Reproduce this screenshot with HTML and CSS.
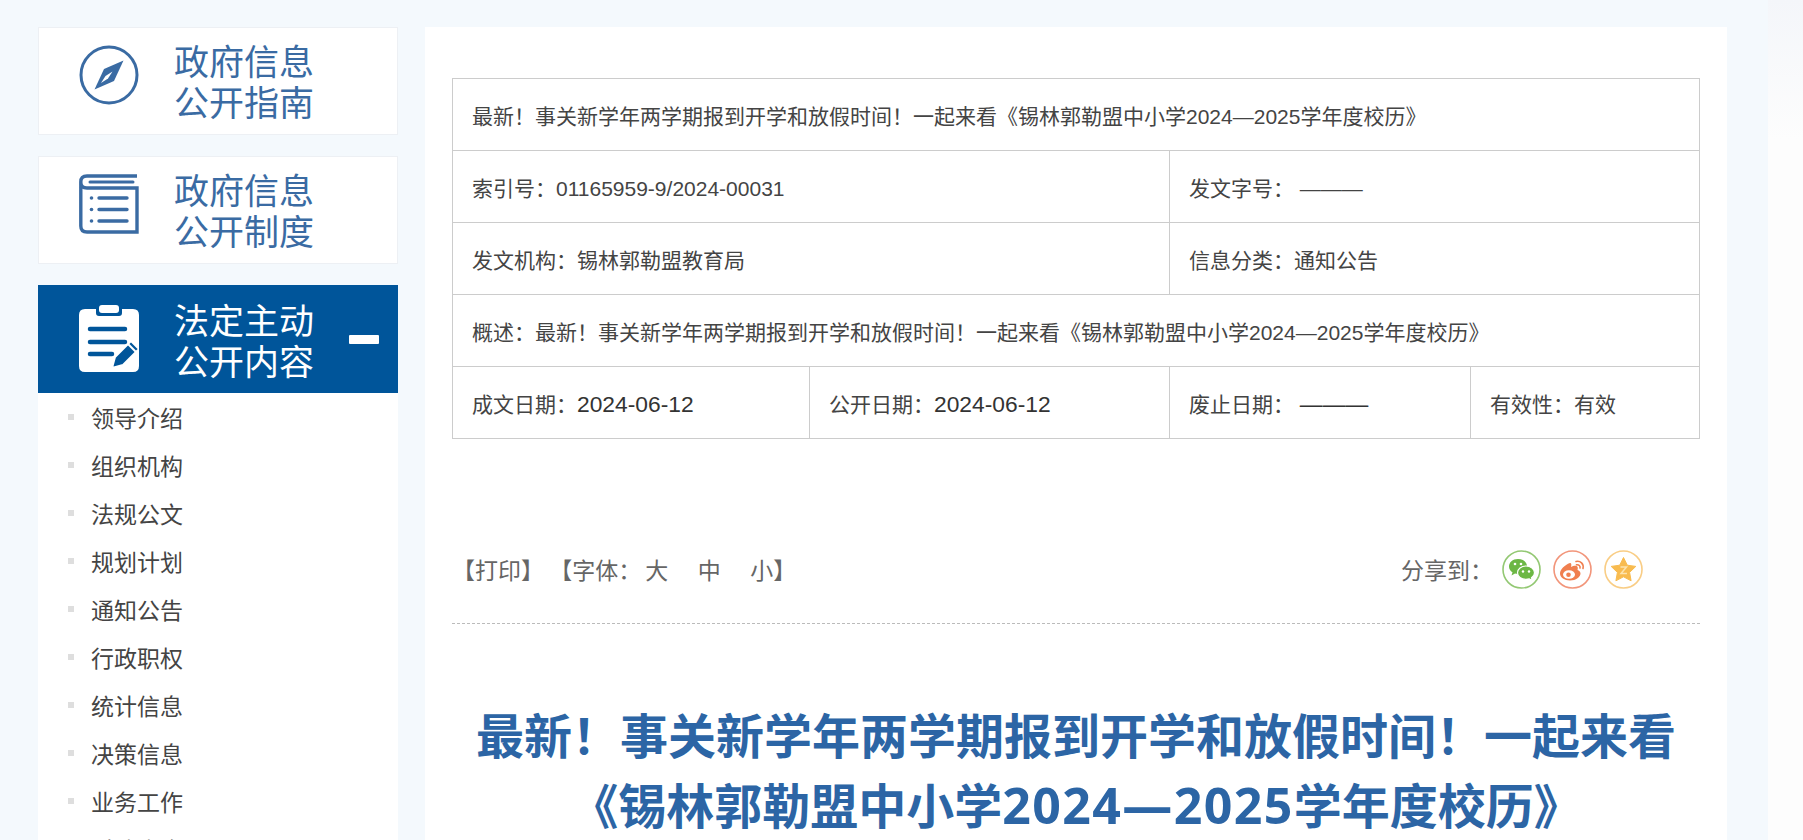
FILE: index.html
```html
<!DOCTYPE html>
<html lang="zh-CN">
<head>
  <meta charset="UTF-8">
  <title>最新！事关新学年两学期报到开学和放假时间</title>
  <link rel="stylesheet" href="styles.css">
</head>
<body>
  <div class="page">

    <aside class="sidebar">
      <a class="side-card" href="#">
        <svg class="side-icon" viewBox="0 0 60 60">
          <circle cx="30" cy="30" r="28" fill="none" stroke="currentColor" stroke-width="3"/>
          <path d="M44.500 15.500 L35 36 L15.500 44.500 L25 24 Z" fill="currentColor"/>
          <path d="M33.500 26.500 L29 33.500 L22 38 L26.500 31 Z" fill="#fff"/>
        </svg>
        <span class="side-title">政府信息<br>公开指南</span>
      </a>
      <a class="side-card" href="#">
        <svg class="side-icon" viewBox="0 0 60 60">
          <path d="M58 2 H8 Q1.800 2 1.800 8 V52 Q1.800 58 8 58 H58 V14 H8 Q1.800 14 1.800 8" fill="none" stroke="currentColor" stroke-width="3.400"/>
          <path d="M11 8 H54" stroke="currentColor" stroke-width="3" stroke-linecap="round"/>
          <path d="M20 24 H48 M20 35.500 H48 M20 47 H48" stroke="currentColor" stroke-width="3.400" stroke-linecap="round"/>
          <circle cx="12.500" cy="24" r="1.800" fill="currentColor"/>
          <circle cx="12.500" cy="35.500" r="1.800" fill="currentColor"/>
          <circle cx="12.500" cy="47" r="1.800" fill="currentColor"/>
        </svg>
        <span class="side-title">政府信息<br>公开制度</span>
      </a>
      <a class="side-card side-card-active" href="#">
        <svg class="side-icon" viewBox="0 0 60 67">
          <path d="M6 4 H17 V8 Q17 11 20 11 H40 Q43 11 43 8 V4 H54 Q60 4 60 10 V61 Q60 67 54 67 H6 Q0 67 0 61 V10 Q0 4 6 4 Z" fill="#fff"/>
          <rect x="20" y="0" width="20" height="8" rx="3" fill="#fff"/>
          <path d="M11 24 H46 M11 37 H46 M11 49 H33" stroke="#00559a" stroke-width="4.500" stroke-linecap="round"/>
          <path d="M33 63 L36 52 L52 36 L60 44 L44 60 Z" fill="#00559a" stroke="#fff" stroke-width="2"/>
          <path d="M49 39 L57 47" stroke="#fff" stroke-width="2"/>
        </svg>
        <span class="side-title">法定主动<br>公开内容</span>
        <span class="side-minus"></span>
      </a>
      <ul class="side-list">
        <li><a href="#">领导介绍</a></li>
        <li><a href="#">组织机构</a></li>
        <li><a href="#">法规公文</a></li>
        <li><a href="#">规划计划</a></li>
        <li><a href="#">通知公告</a></li>
        <li><a href="#">行政职权</a></li>
        <li><a href="#">统计信息</a></li>
        <li><a href="#">决策信息</a></li>
        <li><a href="#">业务工作</a></li>
        <li><a href="#">财政资金</a></li>
      </ul>
    </aside>

    <main class="content">
      <table class="info-table">
        <colgroup>
          <col class="col-a">
          <col class="col-b">
          <col class="col-c">
          <col class="col-d">
        </colgroup>
        <tr>
          <td colspan="4">最新！事关新学年两学期报到开学和放假时间！一起来看《锡林郭勒盟中小学2024—2025学年度校历》</td>
        </tr>
        <tr>
          <td colspan="2">索引号：01165959-9/2024-00031</td>
          <td colspan="2">发文字号： ———</td>
        </tr>
        <tr>
          <td colspan="2">发文机构：锡林郭勒盟教育局</td>
          <td colspan="2">信息分类：通知公告</td>
        </tr>
        <tr>
          <td colspan="4">概述：最新！事关新学年两学期报到开学和放假时间！一起来看《锡林郭勒盟中小学2024—2025学年度校历》</td>
        </tr>
        <tr>
          <td>成文日期：<span class="cell-value">2024-06-12</span></td>
          <td>公开日期：<span class="cell-value">2024-06-12</span></td>
          <td>废止日期： <span class="cell-value">———</span></td>
          <td>有效性：有效</td>
        </tr>
      </table>

      <div class="tools">
        <div class="tools-left">
          <a href="#">【打印】</a>
          <span>【字体：<a class="size-link" href="#">大</a><a class="size-link" href="#">中</a><a class="size-link" href="#">小</a>】</span>
        </div>
        <div class="share">
          <span class="share-label">分享到：</span>
          <a class="share-btn" href="#">
            <svg viewBox="0 0 39 39">
              <circle cx="19.500" cy="19.500" r="18.500" fill="none" stroke="#93c873" stroke-width="1.600"/>
              <path d="M16 9 C10.500 9 7 12.500 7 16.500 C7 19 8.300 21 10.500 22.300 L9.500 25.500 L13 23.500 C14 23.800 15 23.900 16 23.900 C21.500 23.900 25 20.500 25 16.500 C25 12.500 21.500 9 16 9 Z" fill="#6cb744"/>
              <path d="M24 16 C28.800 16 32.500 19 32.500 22.700 C32.500 24.800 31.300 26.600 29.500 27.800 L30.300 30.500 L27.300 28.900 C26.300 29.200 25.200 29.400 24 29.400 C19.200 29.400 15.500 26.400 15.500 22.700 C15.500 19 19.200 16 24 16 Z" fill="#6cb744" stroke="#fff" stroke-width="1.200"/>
              <circle cx="13" cy="14" r="1.300" fill="#fff"/>
              <circle cx="19" cy="14" r="1.300" fill="#fff"/>
              <circle cx="21" cy="21.500" r="1.200" fill="#fff"/>
              <circle cx="27" cy="21.500" r="1.200" fill="#fff"/>
            </svg>
          </a>
          <a class="share-btn" href="#">
            <svg viewBox="0 0 39 39">
              <circle cx="19.500" cy="19.500" r="18.500" fill="none" stroke="#f2957a" stroke-width="1.600"/>
              <path d="M17 13 C11.500 15 7 19.500 7 23.500 C7 27.500 11.500 30.500 17 30.500 C23 30.500 27.500 27 27.500 23.500 C27.500 21.500 26 20.500 24.500 20 C25 18.500 25 17 24 16.300 C22.500 15.300 20 16 18 17 C18.600 15 18.500 12.500 17 13 Z" fill="#f07f4f"/>
              <ellipse cx="16" cy="24.500" rx="6" ry="4.300" fill="#fff"/>
              <circle cx="15.500" cy="24.800" r="2.300" fill="#f07f4f"/>
              <path d="M23 11.500 C27.500 10.500 31 14 30 18.500 M23.500 14.800 C25.800 14.300 27.500 16 27 18" fill="none" stroke="#f07f4f" stroke-width="1.600" stroke-linecap="round"/>
            </svg>
          </a>
          <a class="share-btn" href="#">
            <svg viewBox="0 0 39 39">
              <circle cx="19.500" cy="19.500" r="18.500" fill="none" stroke="#f9cd85" stroke-width="1.600"/>
              <path d="M19.500 7.500 L23.300 15.200 L31.800 16.400 L25.600 22.400 L27.100 30.800 L19.500 26.800 L11.900 30.800 L13.400 22.400 L7.200 16.400 L15.700 15.200 Z" fill="#f8bb4f" stroke="#f8bb4f" stroke-linejoin="round"/>
              <path d="M16.500 17 H22.500 L17 23.500 H23" fill="none" stroke="#fde3ad" stroke-width="1.500"/>
            </svg>
          </a>
        </div>
      </div>

      <h1 class="article-title">最新！事关新学年两学期报到开学和放假时间！一起来看《锡林郭勒盟中小学<span class="title-num">2024—2025</span>学年度校历》</h1>
    </main>

    <div class="edge-strip"></div>
  </div>
</body>
</html>
```

FILE: styles.css
```css
/* General Styles */
html, body {
  margin: 0;
  padding: 0;
  height: 100%;
  overflow: hidden;
}

body {
  background-color: #f4f9fd;
  color: #444;
  font-family: "Liberation Sans", "Noto Sans CJK SC", sans-serif;
}

a {
  color: inherit;
  text-decoration: none;
}

.page {
  display: flex;
  align-items: flex-start;
  height: 100%;
  padding: 27px 0 0 38px;
  box-sizing: border-box;
}

/* Sidebar */
.sidebar {
  width: 360px;
  flex-shrink: 0;
}

.side-card {
  display: flex;
  align-items: center;
  height: 108px;
  margin-bottom: 21px;
  padding-left: 40px;
  box-sizing: border-box;
  background: #fff;
  border: 1px solid #edf0f4;
  color: #3a6ba3;
}

.side-card-active {
  margin-bottom: 0;
  padding-left: 41px;
  background: #00559a;
  border: none;
  color: #fff;
}

.side-icon {
  width: 60px;
  height: 60px;
  flex-shrink: 0;
  margin-bottom: 12px;
}

.side-card-active .side-icon {
  height: 67px;
  margin-bottom: 2px;
}

.side-title {
  margin-left: 35px;
  margin-bottom: 2px;
  font-family: "Noto Sans CJK SC", sans-serif;
  font-size: 35px;
  line-height: 41px;
}

.side-card-active .side-title {
  margin-bottom: 0;
}

.side-minus {
  width: 30px;
  height: 9px;
  margin-left: auto;
  margin-right: 19px;
  background: #fff;
  border-radius: 1px;
}

.side-list {
  list-style: none;
  margin: 0;
  padding: 0 0 40px 30px;
  background: #fff;
}

.side-list li {
  position: relative;
  height: 48px;
  padding-left: 23px;
  font-family: "Noto Sans CJK SC", sans-serif;
  font-size: 23px;
  line-height: 48px;
  color: #444;
}

.side-list li::before {
  content: "";
  position: absolute;
  left: 0;
  top: 21px;
  width: 6px;
  height: 6px;
  background: #dedede;
}

/* Main Content */
.content {
  width: 1302px;
  height: 900px;
  flex-shrink: 0;
  margin-left: 27px;
  padding: 51px 27px 0;
  box-sizing: border-box;
  background: #fff;
}

.info-table {
  width: 1247px;
  table-layout: fixed;
  border-collapse: collapse;
  font-size: 21px;
  color: #444;
}

.col-a { width: 357px; }
.col-b { width: 360px; }
.col-c { width: 301px; }
.col-d { width: 229px; }

.info-table td {
  height: 72px;
  padding: 0 0 0 19px;
  box-sizing: border-box;
  border: 1px solid #ccc;
  white-space: nowrap;
}

.cell-value {
  font-size: 22.8px;
  color: #333;
}

.tools {
  display: flex;
  justify-content: space-between;
  align-items: center;
  height: 80px;
  margin-top: 90px;
  padding-bottom: 14px;
  border-bottom: 1px dashed #bbb;
  font-family: "Noto Sans CJK SC", sans-serif;
  font-size: 23px;
  color: #666;
}

.size-link {
  margin-right: 29.5px;
}

.size-link:first-child {
  margin-left: 4px;
}

.size-link:last-child {
  margin-right: 0;
}

.share {
  display: flex;
  align-items: center;
  margin-right: 57px;
}

.share-label {
  margin-right: -3px;
}

.share-btn {
  display: block;
  width: 39px;
  height: 39px;
  margin-left: 12px;
}

.share-btn svg {
  display: block;
  width: 39px;
  height: 39px;
}

.article-title {
  margin: 74px 0 0;
  font-family: "Noto Sans CJK SC", sans-serif;
  font-size: 48px;
  font-weight: 700;
  line-height: 70px;
  text-align: center;
  color: #2c65a5;
}

.title-num {
  font-family: "Open Sans", "Noto Sans CJK SC", sans-serif;
  font-size: 50px;
  line-height: 1;
  letter-spacing: 1.4px;
}

.edge-strip {
  align-self: stretch;
  flex-shrink: 0;
  width: 35px;
  margin: -27px 0 0 41px;
  background: linear-gradient(180deg, #f4f6fa 0, #fdfdfd 140px);
}
```
